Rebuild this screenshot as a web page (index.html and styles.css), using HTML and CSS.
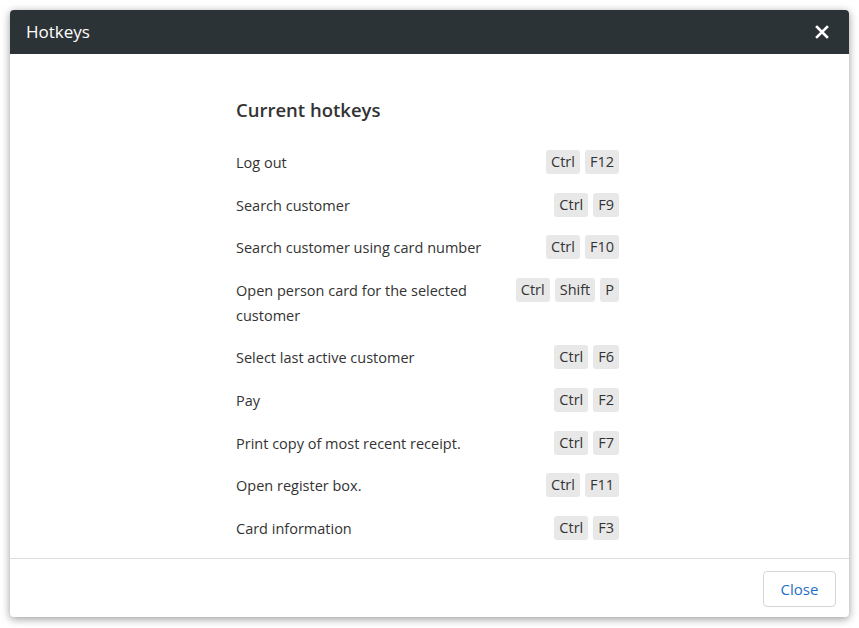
FILE: index.html
```html
<!DOCTYPE html>
<html lang="en">

<head>
    <meta charset="UTF-8">
    <title>Hotkeys</title>
    <link rel="stylesheet" href="styles.css">
</head>

<body>
    <div class="dialog">
        <header class="dialog_head">
            <h2>Hotkeys</h2>
            <button class="close_x" aria-label="Close">
                <svg width="14" height="14" viewBox="0 0 14 14">
                    <path d="M2 2 L12 12 M12 2 L2 12" stroke="#fff" stroke-width="2.6" stroke-linecap="square" />
                </svg>
            </button>
        </header>

        <section class="dialog_body">
            <div class="hotkeys">
                <h3>Current hotkeys</h3>

                <div class="row">
                    <span class="label">Log out</span>
                    <span class="keys"><kbd>Ctrl</kbd><kbd>F12</kbd></span>
                </div>
                <div class="row">
                    <span class="label">Search customer</span>
                    <span class="keys"><kbd>Ctrl</kbd><kbd>F9</kbd></span>
                </div>
                <div class="row">
                    <span class="label">Search customer using card number</span>
                    <span class="keys"><kbd>Ctrl</kbd><kbd>F10</kbd></span>
                </div>
                <div class="row">
                    <span class="label">Open person card for the selected customer</span>
                    <span class="keys"><kbd>Ctrl</kbd><kbd>Shift</kbd><kbd>P</kbd></span>
                </div>
                <div class="row">
                    <span class="label">Select last active customer</span>
                    <span class="keys"><kbd>Ctrl</kbd><kbd>F6</kbd></span>
                </div>
                <div class="row">
                    <span class="label">Pay</span>
                    <span class="keys"><kbd>Ctrl</kbd><kbd>F2</kbd></span>
                </div>
                <div class="row">
                    <span class="label">Print copy of most recent receipt.</span>
                    <span class="keys"><kbd>Ctrl</kbd><kbd>F7</kbd></span>
                </div>
                <div class="row">
                    <span class="label">Open register box.</span>
                    <span class="keys"><kbd>Ctrl</kbd><kbd>F11</kbd></span>
                </div>
                <div class="row">
                    <span class="label">Card information</span>
                    <span class="keys"><kbd>Ctrl</kbd><kbd>F3</kbd></span>
                </div>
            </div>
        </section>

        <footer class="dialog_foot">
            <button class="btn_close">Close</button>
        </footer>
    </div>
</body>

</html>
```

FILE: styles.css
```css
body {
    margin: 0;
    background: #fff;
    font-family: "Open Sans", "Noto Sans", sans-serif;
    color: #333;
}

.dialog {
    margin: 10px;
    width: 839px;
    height: 607px;
    display: flex;
    flex-direction: column;
    background: #fff;
    border-radius: 4px;
    overflow: hidden;
    box-shadow: 0 2px 8px rgba(0, 0, 0, 0.4);
}

.dialog_head {
    height: 44px;
    flex: none;
    box-sizing: border-box;
    background: #2c3336;
    display: flex;
    align-items: center;
    justify-content: space-between;
    padding: 0 20px 2px 16px;
}

.dialog_head h2 {
    margin: 0;
    color: #fff;
    font-weight: normal;
    font-size: 17px;
}

.close_x {
    background: none;
    border: 0;
    padding: 0;
    display: flex;
    margin-top: 2px;
    cursor: pointer;
}

.dialog_body {
    flex: 1;
    padding-top: 43px;
    border-bottom: 1px solid #dcdcdc;
}

.hotkeys {
    width: 383px;
    margin-left: 226px;
    font-size: 14.5px;
}

.hotkeys h3 {
    margin: 0 0 27px 0;
    font-size: 18.5px;
    line-height: 26px;
    font-weight: 600;
}

.row {
    display: flex;
    justify-content: space-between;
    align-items: flex-start;
    gap: 16px;
    line-height: 25px;
    margin-bottom: 17.6px;
}

.keys {
    display: flex;
    gap: 5px;
    flex: none;
}

kbd {
    font-family: inherit;
    font-size: 14.5px;
    background: #e8e8e8;
    border-radius: 3px;
    padding: 0 5px;
    line-height: 24px;
    height: 24px;
    color: #333;
}

.dialog_foot {
    flex: none;
    height: 58px;
    display: flex;
    align-items: center;
    justify-content: flex-end;
    padding: 0 13px 0 14px;
}

.btn_close {
    font-family: inherit;
    font-size: 15px;
    color: #1f6fc5;
    background: #fff;
    border: 1px solid #d6d6d6;
    border-radius: 4px;
    width: 73px;
    height: 36px;
    margin-top: 2px;
    cursor: pointer;
}
```
